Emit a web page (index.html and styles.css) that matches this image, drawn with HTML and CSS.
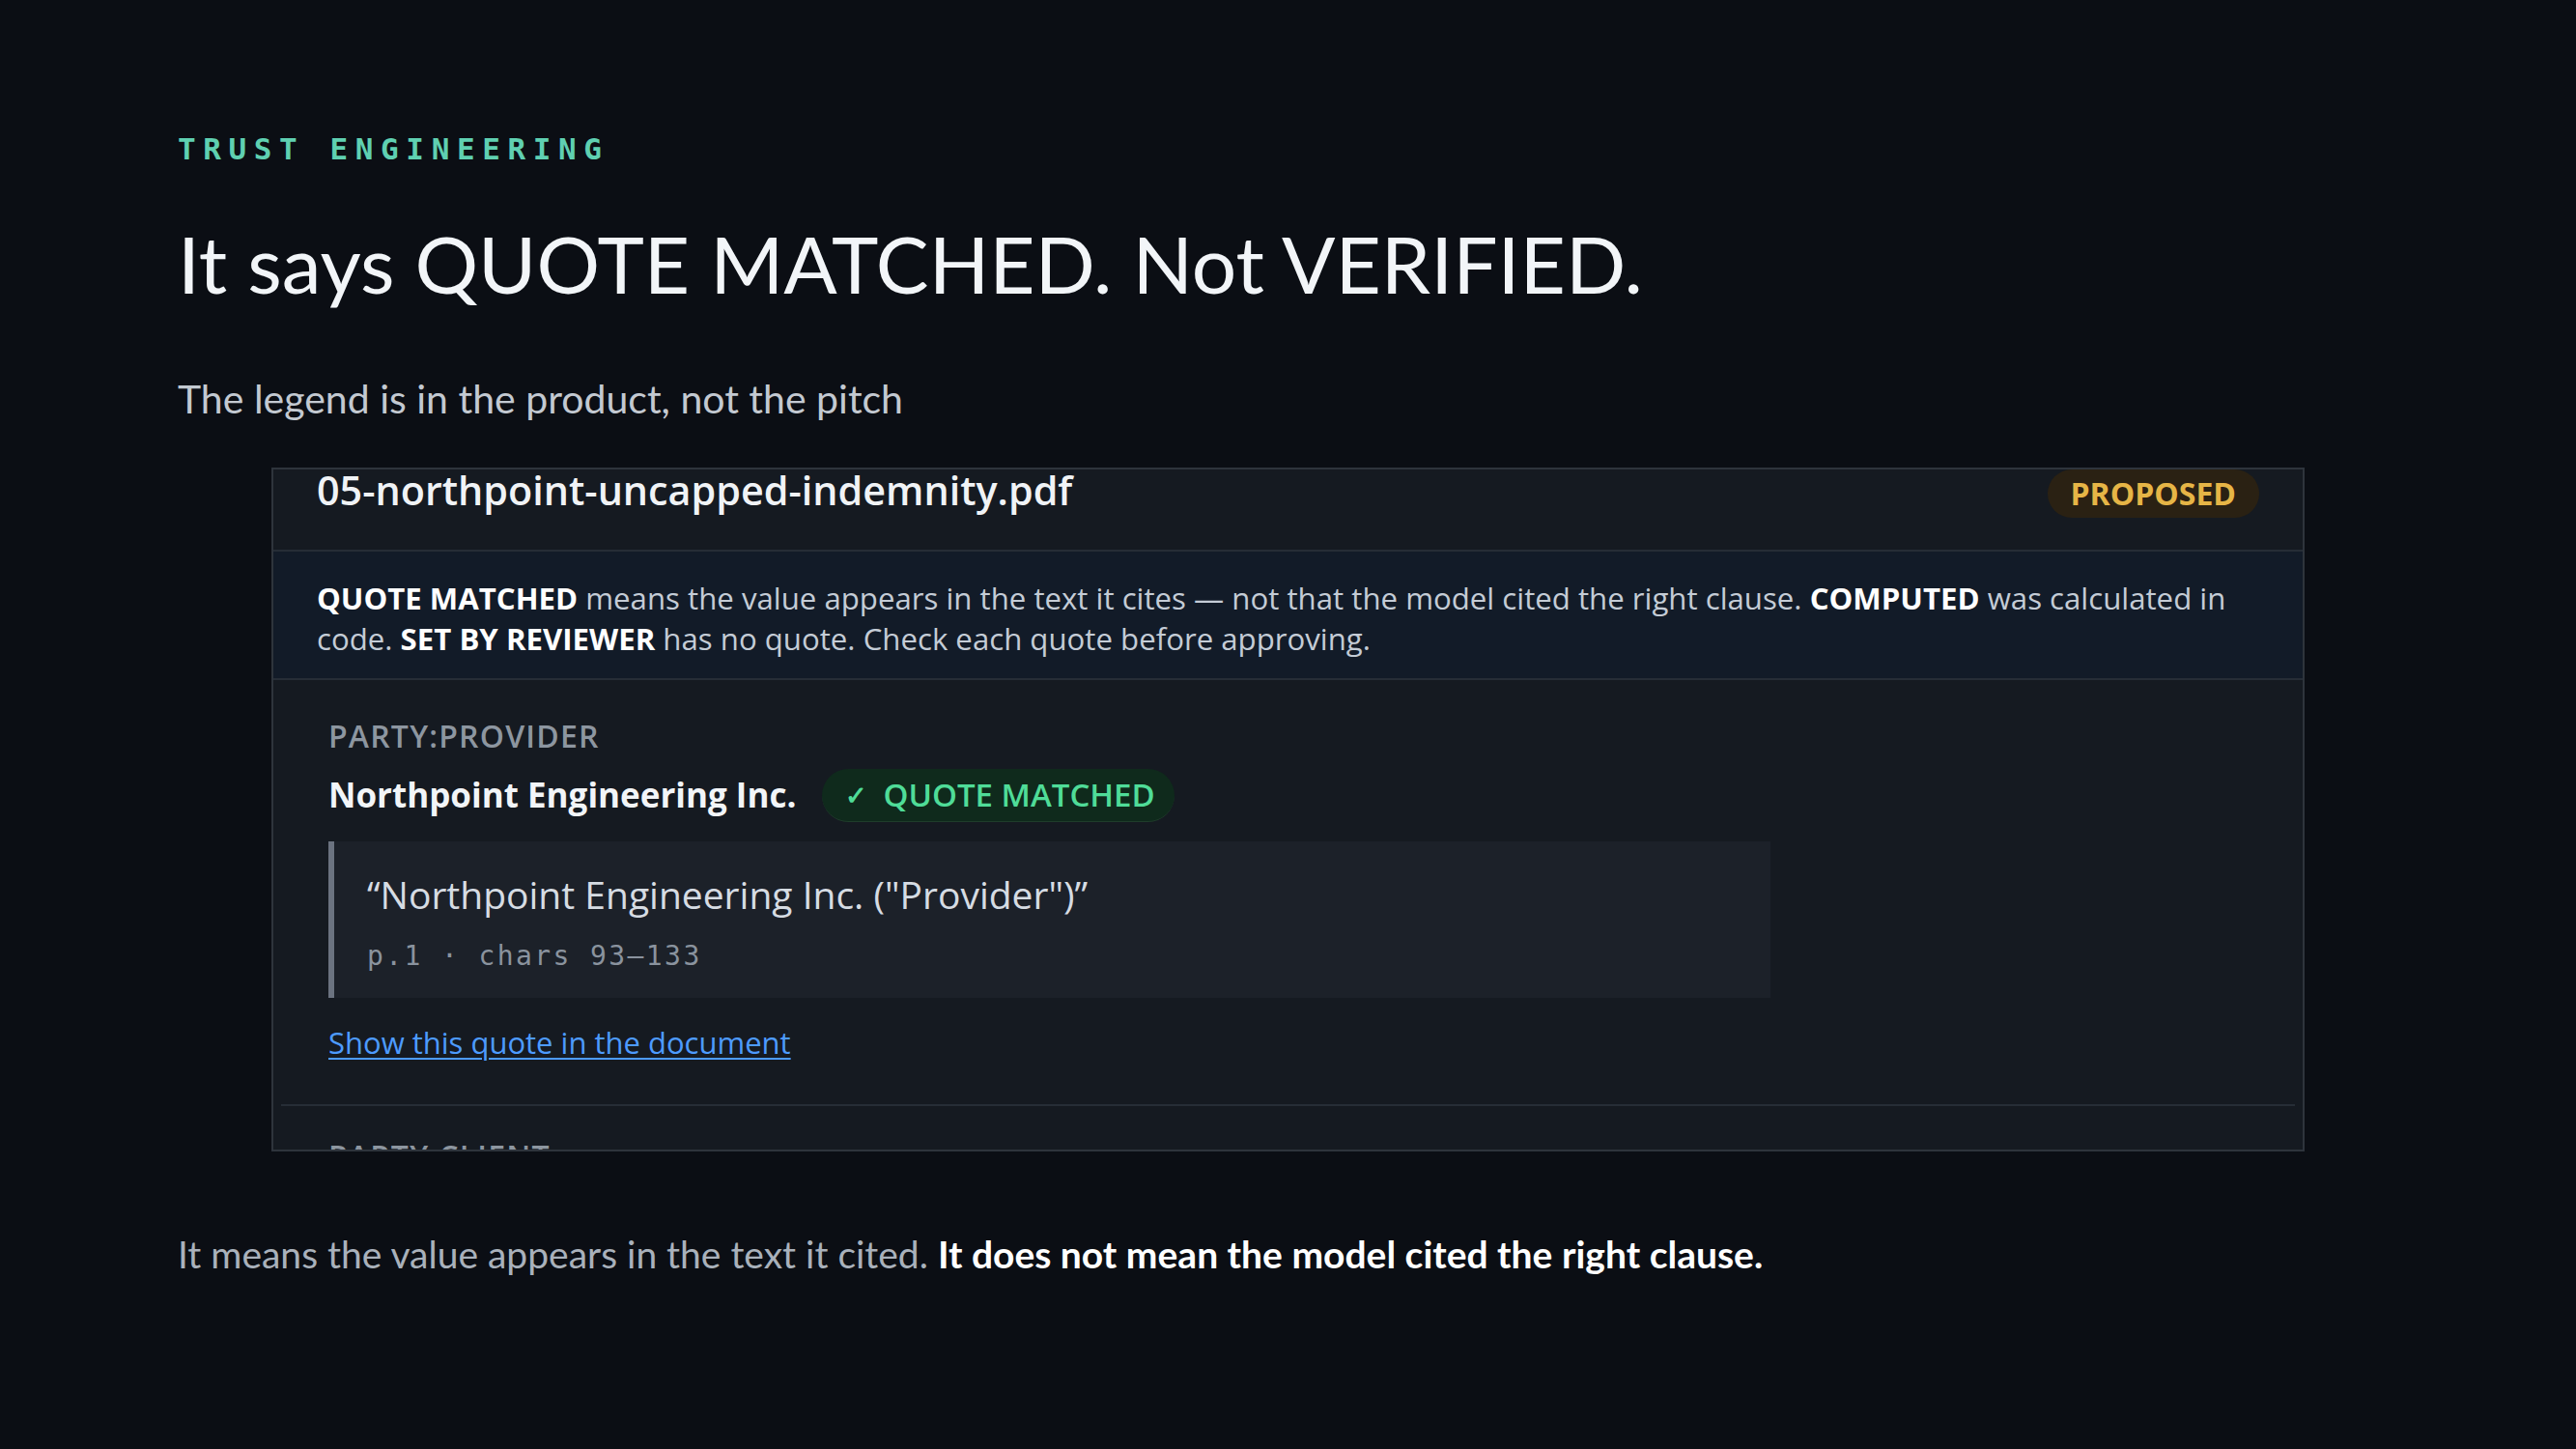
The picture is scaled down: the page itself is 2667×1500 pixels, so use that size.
FILE: index.html
```html
<!DOCTYPE html>
<html lang="en">
<head>
<meta charset="utf-8">
<title>It says QUOTE MATCHED. Not VERIFIED.</title>
<link rel="stylesheet" href="styles.css">
</head>
<body>
<main class="slide">
  <div class="eyebrow">TRUST ENGINEERING</div>
  <h1 class="title">It says QUOTE MATCHED. Not VERIFIED.</h1>
  <p class="subtitle">The legend is in the product, not the pitch</p>

  <section class="shot">
    <header class="shot-head">
      <span class="file">05-northpoint-uncapped-indemnity.pdf</span>
      <span class="pill-proposed">PROPOSED</span>
    </header>
    <div class="legend">
      <b>QUOTE MATCHED</b> means the value appears in the text it cites — not that the model cited the right clause. <b>COMPUTED</b> was calculated in<br>code. <b>SET BY REVIEWER</b> has no quote. Check each quote before approving.
    </div>
    <div class="field">
      <div class="field-label">PARTY:PROVIDER</div>
      <div class="field-row">
        <span class="field-value">Northpoint Engineering Inc.</span>
        <span class="pill-matched"><span class="check">✓</span>QUOTE MATCHED</span>
      </div>
      <blockquote class="quote">
        <div class="quote-text">“Northpoint Engineering Inc. ("Provider")”</div>
        <div class="quote-meta">p.1 · chars 93–133</div>
      </blockquote>
      <a class="quote-link" href="#">Show this quote in the document</a>
    </div>
    <div class="field field-next">
      <div class="field-label">PARTY:CLIENT</div>
    </div>
  </section>

  <p class="takeaway">It means the value appears in the text it cited. <strong>It does not mean the model cited the right clause.</strong></p>
</main>
</body>
</html>
```

FILE: styles.css
```css
html, body {
  margin: 0;
  padding: 0;
  background: #0b0e14;
}

.slide {
  width: 2667px;
  height: 1500px;
  box-sizing: border-box;
  padding: 136px 184px 0 184px;
  font-family: "Lato", "Open Sans", sans-serif;
  overflow: hidden;
}

.eyebrow {
  font-family: "DejaVu Sans Mono", monospace;
  font-weight: 700;
  font-size: 31px;
  line-height: 36px;
  letter-spacing: 7.6px;
  color: #5fd0b1;
}

.title {
  margin: 51px 0 0 0;
  font-family: "Lato", sans-serif;
  font-weight: 400;
  font-size: 82px;
  line-height: 1.2;
  color: #f2f5f8;
}

.subtitle {
  margin: 67px 0 0 0;
  font-size: 41px;
  line-height: 1.2;
  color: #c3c9d1;
}

/* embedded product screenshot */
.shot {
  width: 2105px;
  height: 708px;
  box-sizing: border-box;
  margin: 46px auto 0 auto;
  border: 2px solid #2e343c;
  background: #151a21;
  overflow: hidden;
  font-family: "Open Sans", sans-serif;
}

.shot-head {
  display: flex;
  justify-content: space-between;
  align-items: flex-start;
  height: 83px;
  padding: 0 45px;
  border-bottom: 2px solid #262d36;
}

.file {
  font-weight: 600;
  font-size: 41.3px;
  line-height: 42px;
  color: #f0f3f6;
}

.pill-proposed {
  height: 50px;
  line-height: 50px;
  padding: 0 24px;
  border-radius: 26px;
  background: #2a2113;
  color: #e6b546;
  font-weight: 700;
  font-size: 32px;
}

.legend {
  padding: 27px 45px 20px 45px;
  background: #121b28;
  border-bottom: 2px solid #262d36;
  font-size: 31.2px;
  line-height: 42px;
  color: #c4ccd6;
  white-space: nowrap;
}

.legend b {
  font-weight: 700;
  color: #ffffff;
}

.field {
  margin: 0 8px;
  padding: 38px 49px 43px 49px;
  border-bottom: 2px solid #262d36;
}

.field-label {
  font-weight: 600;
  font-size: 32px;
  line-height: 40px;
  letter-spacing: 1.2px;
  color: #8d96a0;
}

.field-row {
  display: flex;
  align-items: center;
  gap: 27px;
  margin-top: 14px;
}

.field-value {
  font-weight: 700;
  font-size: 35px;
  line-height: 44px;
  color: #f2f5f8;
}

.pill-matched {
  display: inline-flex;
  align-items: center;
  height: 55px;
  box-sizing: border-box;
  padding: 0 20px 0 24px;
  border-radius: 28px;
  background: #0f2a1c;
  border-bottom: 1px solid #1f3d2b;
  color: #4fdc98;
  font-weight: 600;
  font-size: 33px;
}

.check {
  font-size: 27px;
  margin-right: 16px;
}

.quote {
  width: 1493px;
  box-sizing: border-box;
  margin: 20px 0 0 0;
  padding: 30px 34px 25px 34px;
  border-left: 6px solid #6b7380;
  background: #1c2129;
}

.quote-text {
  font-size: 39px;
  line-height: 50px;
  color: #d6dce3;
}

.quote-meta {
  margin-top: 21px;
  font-family: "DejaVu Sans Mono", monospace;
  font-size: 28px;
  line-height: 36px;
  letter-spacing: 2.4px;
  color: #8a939e;
}

.quote-link {
  display: inline-block;
  margin-top: 25px;
  font-size: 31px;
  line-height: 42px;
  color: #4d9bff;
  text-decoration: underline;
  text-decoration-thickness: 2px;
  text-underline-offset: 4px;
}

.field-next {
  border-bottom: none;
  padding-top: 32px;
}

.takeaway {
  margin: 83px 0 0 0;
  font-size: 39px;
  line-height: 1.2;
  color: #a9b1bb;
}

.takeaway strong {
  font-weight: 700;
  color: #ffffff;
}
```
